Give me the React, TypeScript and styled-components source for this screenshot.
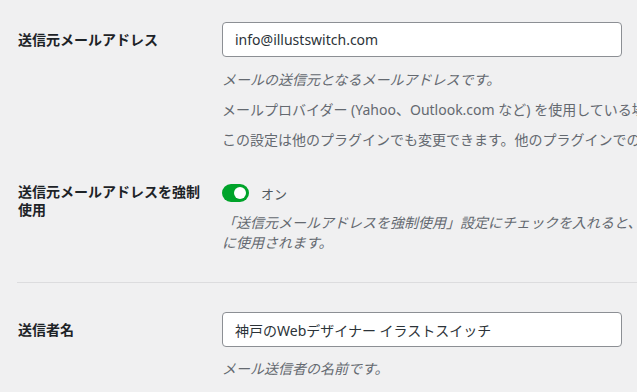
import styled, {createGlobalStyle} from "styled-components";

const GlobalStyle = createGlobalStyle`
  body {
    margin: 0;
    background: #f0f0f1;
    overflow: hidden;
    font-family: "Segoe UI", "Noto Sans", "Noto Sans CJK JP", sans-serif;
    font-size: 14px;
    color: #1d2327;
  }
`;

const Page = styled.div`
  width: 637px;
  overflow: hidden;
  padding-left: 17px;
  box-sizing: border-box;
`;

const Row = styled.div<{$top: number; $bottom?: number; $line?: boolean}>`
  display: flex;
  align-items: flex-start;
  padding-top: ${(p) => p.$top}px;
  padding-bottom: ${(p) => p.$bottom ?? 0}px;
  border-bottom: ${(p) => (p.$line ? "1px solid #dcdcde" : "none")};
`;

const Label = styled.div<{$pad: number}>`
  width: 205px;
  flex-shrink: 0;
  padding-top: ${(p) => p.$pad}px;
  padding-left: 1px;
  box-sizing: border-box;
  font-weight: 700;
  line-height: 18px;
`;

const Field = styled.div`
  display: flex;
  flex-direction: column;
  min-width: 0;
  flex: 1;
`;

const TextInput = styled.input`
  width: 400px;
  height: 35px;
  box-sizing: border-box;
  padding: 0 12px;
  border: 1px solid #8c8f94;
  border-radius: 4px;
  background: #fff;
  color: #2c3338;
  font: inherit;
  font-size: 14px;
  outline: none;
`;

const Desc = styled.p<{$italic?: boolean; $gap?: number}>`
  margin: ${(p) => p.$gap ?? 10}px 0 0;
  line-height: 20px;
  color: #646970;
  font-style: ${(p) => (p.$italic ? "italic" : "normal")};
  white-space: nowrap;
`;

const ToggleRow = styled.label`
  display: flex;
  align-items: center;
  gap: 12px;
  height: 18px;
  margin-top: 1px;
  color: #50575e;
  font-size: 13px;
`;

const Switch = styled.span<{$on: boolean}>`
  position: relative;
  width: 27px;
  height: 18px;
  border-radius: 9px;
  background: ${(p) => (p.$on ? "#00a32a" : "#8c8f94")};

  &::after {
    content: "";
    position: absolute;
    top: 3px;
    left: ${(p) => (p.$on ? "12px" : "3px")};
    width: 12px;
    height: 12px;
    border-radius: 50%;
    background: #fff;
  }
`;

const App = () => {
  return (
    <Page>
      <GlobalStyle />
      <Row $top={22}>
        <Label $pad={9}>送信元メールアドレス</Label>
        <Field>
          <TextInput type="text" defaultValue="info@illustswitch.com" />
          <Desc $italic $gap={13}>
            メールの送信元となるメールアドレスです。
          </Desc>
          <Desc>
            メールプロバイダー (Yahoo、Outlook.com など) を使用している場合は、このメールアドレスをメールプロバイダーのものと一致させてください。
          </Desc>
          <Desc>
            この設定は他のプラグインでも変更できます。他のプラグインでの設定を上書きするには以下を有効にしてください。
          </Desc>
        </Field>
      </Row>
      <Row $top={33} $bottom={29} $line>
        <Label $pad={0}>
          送信元メールアドレスを強制
          <br />
          使用
        </Label>
        <Field>
          <ToggleRow>
            <Switch $on />
            オン
          </ToggleRow>
          <Desc $italic $gap={11}>
            「送信元メールアドレスを強制使用」設定にチェックを入れると、上記の送信元メールアドレスがすべてのメール送信時
            <br />
            に使用されます。
          </Desc>
        </Field>
      </Row>
      <Row $top={29}>
        <Label $pad={9}>送信者名</Label>
        <Field>
          <TextInput type="text" defaultValue="神戸のWebデザイナー イラストスイッチ" />
          <Desc $italic $gap={12}>
            メール送信者の名前です。
          </Desc>
        </Field>
      </Row>
    </Page>
  );
};

export default App;
